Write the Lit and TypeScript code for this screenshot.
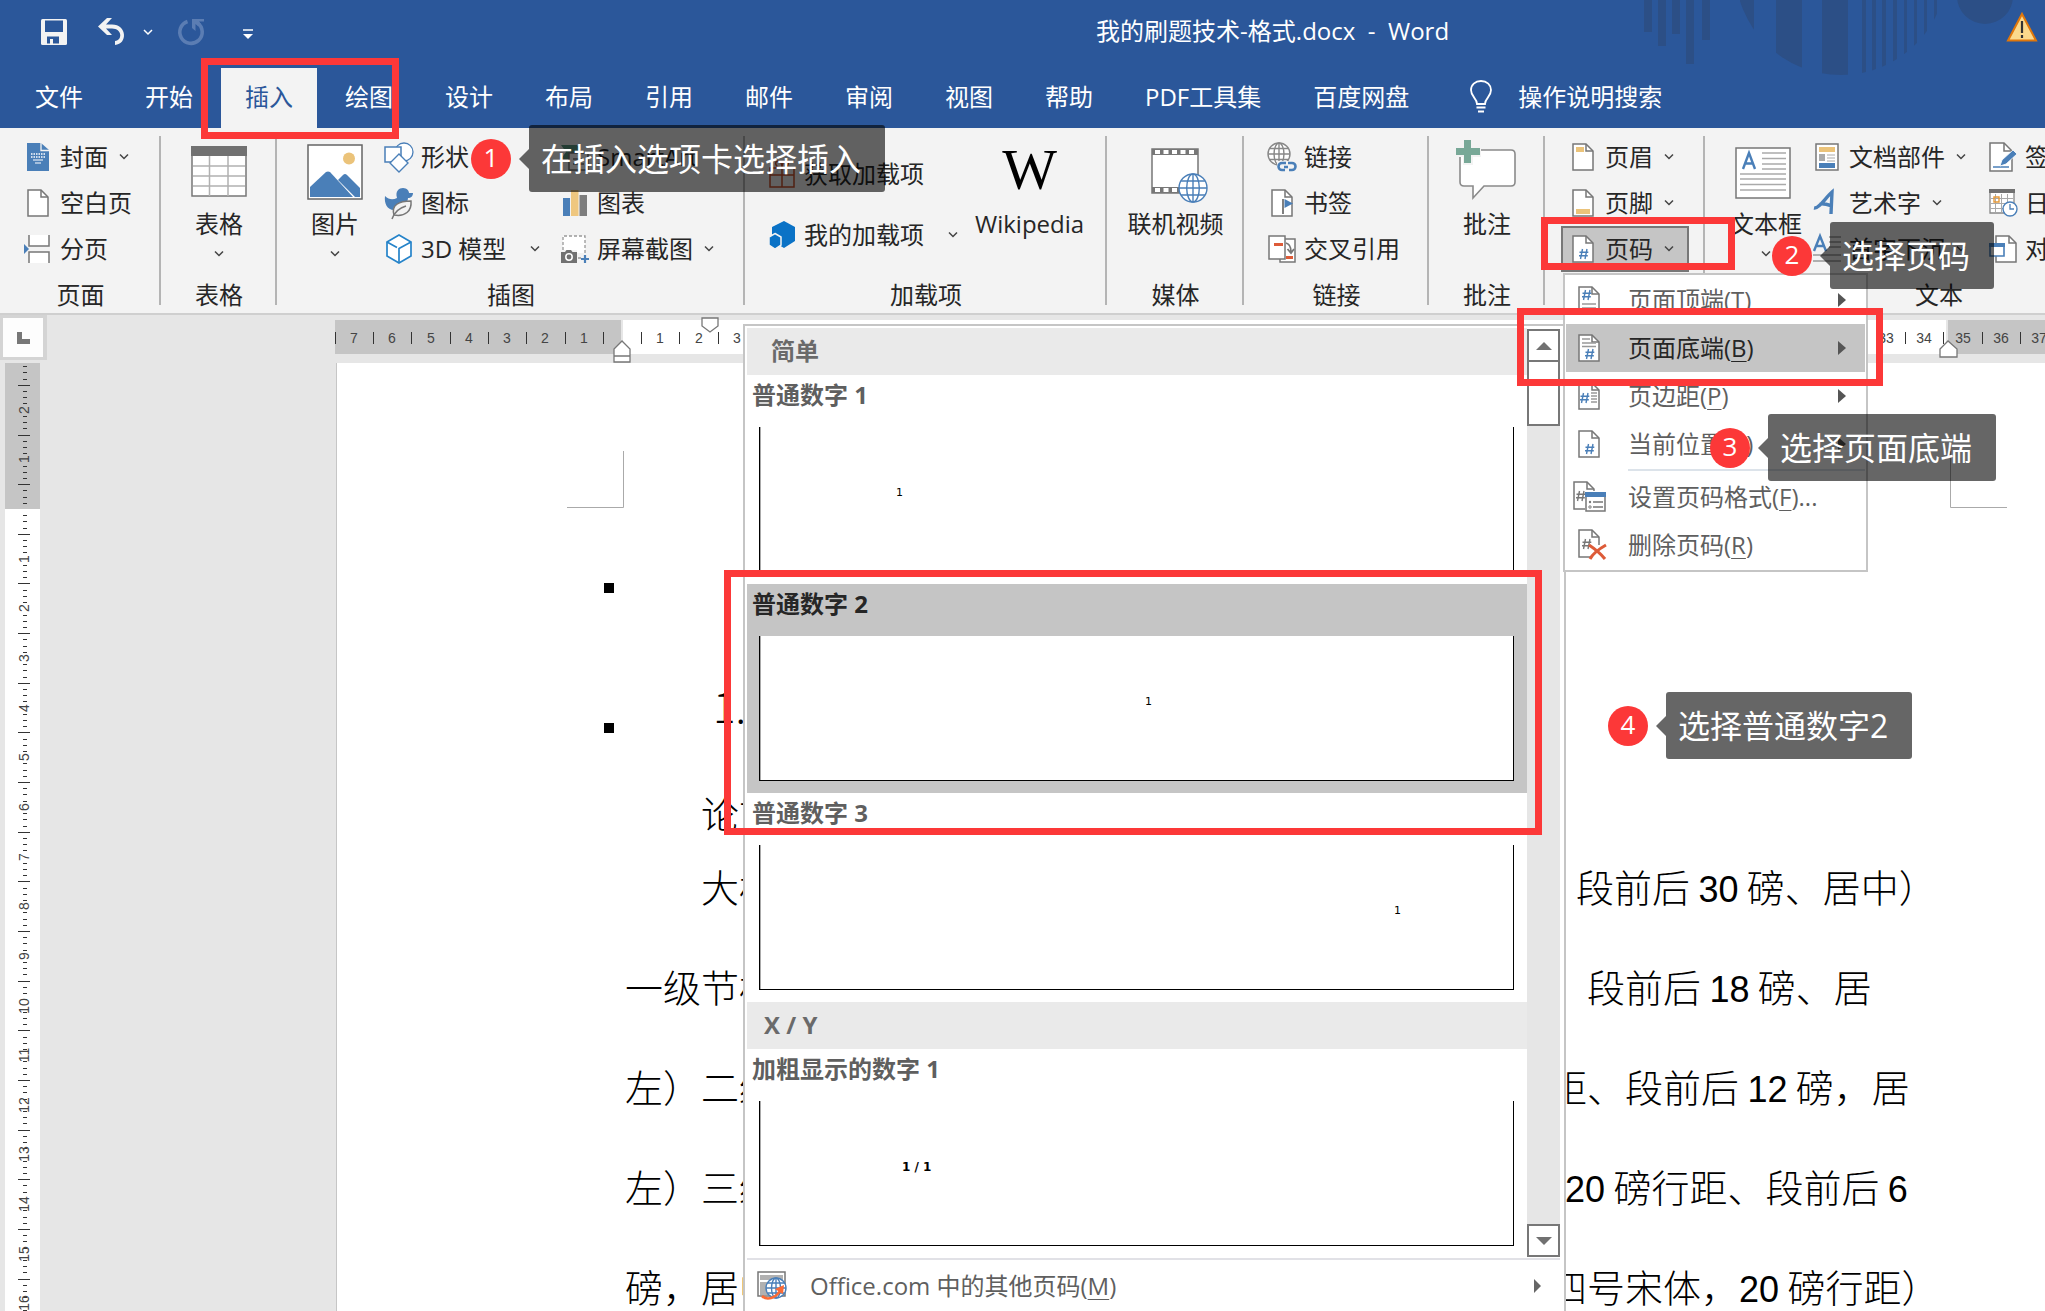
import { LitElement, html, svg, css, nothing } from "lit";
import { customElement, property } from "lit/decorators.js";
import { classMap } from "lit/directives/class-map.js";

const pic = (w: number, h: number, body: unknown) =>
  html`<svg class="pic" width=${w} height=${h} viewBox="0 0 ${w} ${h}" fill="none" aria-hidden="true">${body}</svg>`;

const sheet = (extra: unknown = nothing) =>
  pic(22, 28, svg`<path d="M1 1H14L21 8V27H1Z" fill="#fff" stroke="#777" stroke-width="1.5"/><path d="M14 1V8H21" stroke="#777" stroke-width="1.5"/>${extra}`);

const hash = (x: number, y: number, color = "#4a7fb8") =>
  svg`<path transform="translate(${x} ${y})" d="M3.5 0L1.5 10M8 0L6 10M0.5 3.2H9.3M0 6.8H8.8" stroke=${color} stroke-width="1.4"/>`;

const chevron = () => pic(12, 8, svg`<path d="M2 1.500L6 5.500L10 1.500" stroke="#444" stroke-width="1.5"/>`);

const globe = (cx: number, cy: number, r: number, color: string) =>
  svg`<g stroke=${color} stroke-width="1.4"><circle cx=${cx} cy=${cy} r=${r} fill="#fff"/><ellipse cx=${cx} cy=${cy} rx=${r * 0.45} ry=${r}/><path d="M${cx} ${cy - r}V${cy + r}M${cx - r} ${cy}H${cx + r}M${cx - r * 0.85} ${cy - r * 0.5}H${cx + r * 0.85}M${cx - r * 0.85} ${cy + r * 0.5}H${cx + r * 0.85}"/></g>`;

const icons = {
  save: pic(26, 26, svg`<path d="M0 1.5Q0 0 1.5 0H24.500Q26 0 26 1.500V24.500Q26 26 24.500 26H1.500Q0 26 0 24.500Z" fill="#f3f3f3"/><path d="M4 1.500H22V13H4ZM6 17.500H18V24.500H12V20H9V24.500H6Z" fill="#2b579a"/>`),
  undo: pic(28, 28, svg`<path d="M0 8.500L9 0H14L8 6.500H14C29 6.500 30 26 17 27V23C25 22 24 10.500 14 10.500H8L14 17H9Z" fill="#f3f3f3"/>`),
  redo: pic(28, 28, svg`<path d="M10.500 3.500A11.200 11.200 0 1 0 20.500 5" stroke="#5b7db3" stroke-width="3.600"/><path d="M15 1H27V3.500H22L24 6L21 8L18.500 6V13L15 10Z" fill="#5b7db3"/>`),
  more: pic(10, 11, svg`<path d="M0 1H10" stroke="#fff" stroke-width="1.500"/><path d="M0 5H10L5 10Z" fill="#fff"/>`),
  whiteChevron: pic(10, 7, svg`<path d="M1 1L5 5L9 1" stroke="#fff" stroke-width="1.500"/>`),
  bulb: pic(24, 34, svg`<path d="M8 24C8 18 2 17 2 10C2 5 6 1 12 1S22 5 22 10C22 17 16 18 16 24Z" stroke="#fff" stroke-width="1.8"/><path d="M7.500 27.500H16.500M9 31.500H15" stroke="#fff" stroke-width="2.2"/>`),
  warn: pic(30, 30, svg`<path d="M15 2L29 28.500H1Z" fill="#fbd98c" stroke="#e0770b" stroke-width="2"/><path d="M15 9V21M15 23V26" stroke="#333" stroke-width="2.2"/>`),
  cover: pic(22, 28, svg`<path d="M0 0H14L22 7V28H0Z" fill="#4a7fb8"/><path d="M14 0V7.500H22" stroke="#f3f3f3" stroke-width="1.300"/><path d="M4 11H18M4 14H18" stroke="#fff" stroke-width="1.400" stroke-dasharray="1.5 1"/><path d="M6 17H16M8 20H14" stroke="#fff" stroke-width="1.200"/>`),
  blank: sheet(),
  breakPage: pic(28, 30, svg`<path d="M5 1V12H25V1M5 29V18H25V29" fill="#fff" stroke="#777" stroke-width="1.5"/><path d="M0 10L5 15L0 20Z" fill="#4a7fb8"/>`),
  table: pic(56, 54, svg`<path d="M1 1H55V50H1Z" fill="#fff" stroke="#777" stroke-width="1.5"/><path d="M0 0H56V10H0Z" fill="#717171"/><path d="M2 20H54M2 30H54M2 40H54M18.500 10V50M37 10V50" stroke="#b1b1b1" stroke-width="1.5"/>`),
  picture: pic(56, 56, svg`<path d="M1 1H55V55H1Z" fill="#fff" stroke="#666" stroke-width="1.500"/><circle cx="42" cy="14.500" r="6" fill="#ebc37a"/><path d="M3 53V43L19 28Q21 27 23 28L46 53Z" fill="#4a7fb8"/><path d="M31 36L36 31Q38 29 40 31L53 44V53H48Z" fill="#4a7fb8"/>`),
  shapes: pic(30, 30, svg`<circle cx="20" cy="10" r="9" fill="#fff" stroke="#4a7fb8" stroke-width="1.3"/><path d="M1 5H17V20H1Z" fill="#fff" stroke="#4a7fb8" stroke-width="1.500"/><path d="M15 12L24 21L15 30L6 21Z" fill="#fff" stroke="#4a7fb8" stroke-width="1.4"/>`),
  duck: pic(30, 30, svg`<path d="M1 8C5 12 9 12 13 10C11 3 15 0 19 0C23 0 25 3 25 5H29C29 8 27 10 24 10C24 14 19 22 10 22C3 22 0 15 1 8Z" fill="#4a7fb8"/><path d="M10 27C7 17 15 13 27 13C28 23 21 29 10 27Z" fill="#f3f3f3" stroke="#777" stroke-width="1.500"/><path d="M8 31C10 25 15 20 22 18" stroke="#777" stroke-width="1.500"/>`),
  cube: pic(28, 30, svg`<path d="M14 1L26 8V22L14 29L2 22V8Z" stroke="#2583c9" stroke-width="1.700" fill="#fff"/><path d="M2 8L12 13.500M26 8L14 14.500V29" stroke="#2583c9" stroke-width="1.700"/>`),
  smart: pic(28, 28, svg`<path d="M0 2H16L22 10L16 16H0L5 9Z" fill="#5a9a83"/><path d="M8 10H27V27H8Z" fill="#fff" stroke="#777" stroke-width="1.5"/><path d="M12 16H23M12 21H23" stroke="#777" stroke-width="1.5"/>`),
  chart: pic(24, 26, svg`<path d="M0 8H7V26H0Z" fill="#4a7fb8"/><path d="M8 0H15.500V26H8Z" fill="#efc77f"/><path d="M16.500 5H24V26H16.500Z" fill="#7d7d7d"/>`),
  shot: pic(28, 28, svg`<path d="M2 1H24V18H16V15H2Z" fill="#fff"/><path d="M2 15V1H24V20M17 23H20" stroke="#999" stroke-width="1.300" stroke-dasharray="3 2"/><path d="M0 17H4L5.500 15H10L11.500 17H16V28H0Z" fill="#717171"/><circle cx="8" cy="22" r="3.2" stroke="#fff" stroke-width="1.500"/><path d="M24 20V28M20 24H28" stroke="#4a7fb8" stroke-width="2.200"/>`),
  gift: pic(26, 28, svg`<path d="M1 8H25V27H1ZM1 15H25M13 8V27" stroke="#c8502c" stroke-width="1.500"/><path d="M13 8C6 8 5 1 9 1S13 8 13 8S13 1 17 1S20 8 13 8" stroke="#c8502c" stroke-width="1.500"/>`),
  addin: pic(26, 28, svg`<path d="M15 0L26 6V20L15 27L3 20V6Z" fill="#0a72c6"/><path d="M6 12.500L12 16V24L6 28L0 24V16Z" fill="#0a72c6" stroke="#f3f3f3" stroke-width="1.5"/>`),
  film: pic(50, 52, svg`<path d="M1 1H47V45H1Z" fill="#fff" stroke="#777" stroke-width="1.5"/><path d="M1 4H47M1 42H47" stroke="#777" stroke-width="6"/><path d="M4 4H46M4 42H46" stroke="#fff" stroke-width="4" stroke-dasharray="5 3.500"/>${globe(42, 40, 14, "#4a7fb8")}`),
  link: pic(30, 30, svg`${globe(12, 12, 11, "#888")}<path d="M10 19H30V30H10Z" fill="#f3f3f3"/><path d="M19 21H15A3.500 3.500 0 0 0 15 28H18M17 25H21M22 28H25A3.500 3.500 0 0 0 25 21H21" stroke="#4a7fb8" stroke-width="2.600"/>`),
  bookmark: sheet(svg`<path d="M12 10V25" stroke="#555" stroke-width="1.500"/><path d="M13.500 10L22 14.500L13.500 19Z" fill="#4a7fb8"/>`),
  cross: pic(28, 28, svg`<path d="M12 4H27V27H12Z" fill="#fff" stroke="#777" stroke-width="1.5"/><path d="M1 1H17V24H1Z" fill="#fff" stroke="#777" stroke-width="1.5"/><path d="M6 8H15V11H6ZM18 21H25V24H18Z" fill="#dd5b38"/><path d="M18 8C22 9 23 12 23 17M19.500 14L23 18L26 14" stroke="#777" stroke-width="1.800"/>`),
  comment: pic(62, 60, svg`<path d="M10 10H55Q59 10 59 14V42Q59 46 55 46H28L17 58V46H8Q4 46 4 42V16Q4 10 10 10Z" fill="#fff" stroke="#8a8a8a" stroke-width="1.600"/><path d="M7 -1H17V7H25V17H17V25H7V17H-1V7H7Z" fill="#f3f3f3"/><path d="M8 0H15V8H24V15H15V23H8V15H0V8H8Z" fill="#78a897"/>`),
  head: sheet(svg`<path d="M4 4H12V9H4Z" fill="#ebc37a"/>`),
  foot: sheet(svg`<path d="M4 20H18V25H4Z" fill="#ebc37a"/>`),
  num: sheet(hash(7, 14)),
  textbox: pic(62, 54, svg`<path d="M1 2H55V52H1Z" fill="#fff" stroke="#777" stroke-width="1.500"/><path d="M8 23L14 7L20 23M10 17.500H18" stroke="#4a7fb8" stroke-width="2.400"/><path d="M27 7H51M27 12.500H51M27 18H51M27 23H51M5 28H51M5 33H51M5 38.500H51M5 44H51" stroke="#aaa" stroke-width="1.300"/>`),
  parts: pic(24, 28, svg`<path d="M1 1H23V27H1Z" fill="#fff" stroke="#777" stroke-width="1.500"/><path d="M4 4H20V9H4Z" fill="#ebc37a"/><path d="M4 11H10V18H4Z" fill="#aaa"/><path d="M12 12H20M12 15H20M12 18H20" stroke="#aaa"/><path d="M4 20H20V25H4Z" fill="#4a7fb8"/>`),
  wordart: pic(28, 26, svg`<path d="M1 18C6 19 13 7 19 2L18 24M7 14C10 13 13 14 19 16" stroke="#4a7fb8" stroke-width="3.400"/>`),
  dropcap: pic(28, 28, svg`<path d="M1 16L7 1L13 16M3 11H11" stroke="#4a7fb8" stroke-width="2.400"/><path d="M16 2H28M16 7H28M16 12H28M0 20H28M0 26H28" stroke="#999" stroke-width="1.300"/>`),
  sign: pic(28, 30, svg`<path d="M1 1H15L23 9V29H1Z" fill="#fff" stroke="#777" stroke-width="1.500"/><path d="M15 1V9H23" stroke="#777" stroke-width="1.500"/><path d="M4 25H20" stroke="#4a7fb8" stroke-width="1.500"/><path d="M11 24L13 18L24 8L28 12L17 22Z" fill="#4a7fb8" stroke="#fff" stroke-width="0.800"/>`),
  date: pic(28, 28, svg`<path d="M1 1H25V24H1Z" fill="#fff" stroke="#888" stroke-width="1.300"/><path d="M0 0H26V4H0Z" fill="#717171"/><path d="M2 9.500H24M2 14.500H24M2 19.500H24M6.500 5V23M12.500 5V23M18.500 5V23" stroke="#aaa"/><path d="M5 8H10V13H5Z" stroke="#e69a3a" stroke-width="1.400"/><circle cx="21" cy="20" r="7" fill="#fff" stroke="#4a7fb8" stroke-width="1.400"/><path d="M21 15V20H25" stroke="#4a7fb8" stroke-width="1.300"/>`),
  object: pic(28, 28, svg`<path d="M7 1H20L27 8V27H7Z" fill="#fff" stroke="#777" stroke-width="1.500"/><path d="M20 1V8H27" stroke="#777" stroke-width="1.500"/><path d="M1 9H15V21H1Z" fill="#fff" stroke="#4a7fb8" stroke-width="1.600"/><path d="M0 8H16V12H0Z" fill="#4a7fb8"/>`),
  mTop: sheet(svg`${hash(4, 4)}<path d="M4 18H18M4 22H18" stroke="#999" stroke-width="1.300"/>`),
  mBottom: sheet(svg`${hash(7, 15)}<path d="M4 5H12M4 9H18M4 12.500H18" stroke="#999" stroke-width="1.300"/>`),
  mMargin: sheet(svg`${hash(2, 11)}<path d="M13 11H19M13 14H19M13 17H19M13 20H19" stroke="#999" stroke-width="1.300"/>`),
  mHere: sheet(hash(7, 14)),
  mFormat: pic(34, 32, svg`<path d="M12 28H1V1H14L21 8V10" fill="#fff" stroke="#777" stroke-width="1.5"/><path d="M14 1V8H21" stroke="#777" stroke-width="1.5"/>${hash(3, 10, "#777")}<path d="M13 12H32V30H13Z" fill="#fff" stroke="#777" stroke-width="1.500"/><path d="M12 11H33V16H12Z" fill="#4a7fb8"/><path d="M20 21H30M20 26H30" stroke="#777" stroke-width="1.300"/><circle cx="17" cy="21" r="1.200" fill="#777"/><circle cx="17" cy="26" r="1.200" stroke="#777"/>`),
  mRemove: pic(30, 32, svg`<path d="M14 28H1V1H14L21 8V16" fill="#fff" stroke="#777" stroke-width="1.500"/><path d="M14 1V8H21" stroke="#777" stroke-width="1.500"/>${hash(4, 10, "#777")}<path d="M11 16C17 20 23 25 27 30M28 16C21 20 14 26 12 30" stroke="#dd5b38" stroke-width="3"/>`),
  office: pic(30, 30, svg`<path d="M1 1H28V25H1Z" fill="#fff" stroke="#777" stroke-width="1.500"/><path d="M3 4H26V9H3ZM3 11H12V24H3Z" fill="#b1b1b1"/>${globe(19, 17, 10, "#4a7fb8")}<path d="M5 25C10 30 20 27 24 18" stroke="#fb6a34" stroke-width="2.600"/><path d="M18 18L27 14L26 23Z" fill="#fb6a34"/>`),
};

@customElement("step-callout")
export class StepCallout extends LitElement {
  @property({ type: Number }) step = 1;
  @property() text = "";
  static styles = css`
    :host { display: flex; align-items: center; gap: 18px; width: max-content; height: 67px; }
    .badge { width: 40px; height: 40px; border-radius: 50%; background: #fc3838; color: #fff; font-size: 26px; line-height: 36px; text-align: center; }
    .bubble { position: relative; height: 67px; line-height: 68px; padding: 0 24px 0 12px; border-radius: 3px; background: rgba(0, 0, 0, 0.6); color: #fff; font-size: 32px; white-space: nowrap; }
    .bubble::before { content: ""; position: absolute; left: -10px; top: 24px; border: solid transparent; border-width: 10px 10px 10px 0; border-right-color: rgba(0, 0, 0, 0.6); }
  `;
  render() {
    return html`<span class="badge">${this.step}</span><span class="bubble">${this.text}</span>`;
  }
}

interface Cmd { icon: unknown; label: string; drop?: "near" | "far"; pressed?: boolean }

const digits = (s: string) => s.split(/(\d+)/).map((p) => (/^\d+$/.test(p) ? html`<span class="digits">${p}</span>` : p));

@customElement("app-root")
export class AppRoot extends LitElement {
  static styles = css`
    :host { display: flex; flex-direction: column; position: relative; height: 100vh; overflow: hidden; background: #e6e6e6; color: #262626; font: 24px/32px "Open Sans", "Noto Sans CJK SC", sans-serif; }
    * { box-sizing: border-box; }
    button { font: inherit; color: inherit; background: none; border: 0; padding: 0; margin: 0; white-space: nowrap; text-align: left; }
    .pic { display: block; flex: none; overflow: visible; }

    .top { position: relative; flex: none; background: #2b579a; color: #fff; }
    .art { position: absolute; top: 0; right: 0; }
    .title-bar { position: relative; display: grid; grid-template-columns: 53.6% auto 1fr; align-items: center; height: 68px; padding-bottom: 4px; }
    .quick { display: flex; align-items: center; padding-left: 41px; }
    .quick .undo { margin-left: 31px; }
    .quick .drop { margin-left: 17px; }
    .quick .redo { margin-left: 24px; }
    .quick .more { margin-left: 38px; margin-top: 4px; }
    .doc-title { font-size: 24px; font-weight: 400; margin: 0; padding-bottom: 2px; white-space: pre; }
    .alert { justify-self: end; margin: 0 8px 10px 0; }
    .tabs { position: relative; display: flex; gap: 4px; height: 60px; padding-left: 11px; }
    .tab { padding: 0 24px 2px; }
    .tab.file { margin-right: 10px; }
    .tab.on { background: #f3f3f3; color: #2b579a; }
    .tell { display: flex; align-items: center; gap: 25px; margin-left: 32px; padding-bottom: 2px; }

    .ribbon { display: flex; flex: none; height: 187px; background: #f3f3f3; border-bottom: 2px solid #cfcfcf; overflow: hidden; }
    .group { position: relative; display: flex; flex: none; flex-direction: column; padding-top: 6px; }
    .group::after { content: ""; position: absolute; right: 0; top: 8px; width: 2px; height: 169px; background: #b4b4b4; }
    .body { display: flex; height: 138px; }
    .caption { line-height: 46px; text-align: center; }
    .col { display: flex; flex-direction: column; }
    .cmd { display: flex; align-items: center; height: 46px; padding: 0 8px; gap: 8px; }
    .cmd .slot { display: flex; justify-content: center; width: 28px; }
    .cmd .near { margin-left: 2px; }
    .cmd .far { margin-left: 15px; }
    .cmd.pressed { background: #c5c5c5; outline: 2px solid #777; outline-offset: -2px; }
    .big { display: flex; flex-direction: column; align-items: center; height: 138px; }
    .big .art-slot { display: flex; align-items: flex-end; height: 68px; padding-bottom: 2px; }
    .big .name { line-height: 44px; }
    .big .chev { padding-top: 4px; }
    .wiki { font: 58px/60px "Liberation Serif", serif; color: #000; }
    .g-page { width: 161px; } .g-page .body { padding-left: 16px; }
    .g-table { width: 116px; } .g-table .body, .g-media .body, .g-note .body { justify-content: center; }
    .g-art { width: 468px; } .g-art .body { padding-left: 8px; }
    .g-art .big { width: 92px; padding-left: 8px; } .g-art .col:nth-of-type(1) { width: 176px; }
    .g-add { width: 362px; } .g-add .body { padding-left: 15px; gap: 8px; }
    .g-add .col { padding-top: 17px; gap: 15px; }
    .g-media { width: 137px; }
    .g-link { width: 185px; } .g-link .body { padding-left: 16px; }
    .g-note { width: 116px; }
    .g-hf { width: 160px; } .g-hf .body { padding-left: 16px; } .g-hf .col { width: 128px; }
    .g-text { width: 468px; } .g-text .body { padding-left: 22px; } .g-text .col:nth-of-type(1) { width: 176px; }
    .g-text .big { width: 78px; }

    .work { display: grid; flex: 1; min-height: 0; grid-template: 48px 1fr / 48px 1fr; overflow: hidden; }
    .corner { display: flex; align-items: center; justify-content: center; width: 47px; height: 45px; border: solid #d4d4d4; border-width: 3px 4px 3px 3px; background: #fdfdfd; }
    .ruler { display: block; width: 100%; height: 100%; font: 14px "Liberation Sans", sans-serif; overflow: hidden; }
    .page { position: relative; margin-left: 288px; padding: 318px 0 0 288px; background: #fff; border-left: 1px solid #c6c6c6; color: #000; font: 38px/48px "Noto Sans CJK SC", sans-serif; font-weight: 300; overflow: hidden; }
    .marks { position: absolute; left: -1px; top: 0; }
    .line { display: flex; height: 48px; margin: 0 0 52px; line-height: 44px; white-space: pre; }
    .line .start { flex: none; width: 924px; }
    .indent .start { padding-left: 76px; }
    .line.tight { margin-bottom: 26px; }
    .page h1 { font: inherit; font-size: 42px; margin: 0 0 61px; padding-left: 88px; }
    .digits { font-family: "Liberation Sans", sans-serif; font-size: 36px; line-height: 1; }

    .gallery { position: absolute; left: 743px; top: 324px; bottom: 0; width: 823px; display: grid; grid-template: auto 1fr / 780px 33px; align-content: start; padding: 2px; border: solid #c5c5c5; border-width: 2px 2px 0 2px; background: #fff; color: #5f5f5f; }
    .section { margin: 0; height: 47px; padding-left: 24px; line-height: 46px; background: #eaeaea; color: #6a6a6a; font-size: 24px; font-weight: 700; }
    .section.latin { padding-left: 17px; }
    .sample { display: flex; flex-direction: column; width: 100%; height: 209px; padding: 0 13px 12px 5px; font-weight: 700; }
    .sample.on { background: #c5c5c5; color: #262626; }
    .sample .name { line-height: 40px; height: 52px; }
    .sheet { flex: none; height: 145px; margin-left: 7px; padding: 58px 112px 0 136px; border: solid #000; border-width: 0 1px 1px 1px; box-shadow: inset 1px 0 #aaa; background: #fff; color: #000; font: 11px/16px "DejaVu Sans", sans-serif; }
    .sheet.center { text-align: center; } .sheet.right { text-align: right; } .sheet.bold { padding-left: 142px; font-weight: 700; font-size: 12px; }
    .scroll { display: flex; flex-direction: column; background: #e6e6e6; margin: 1px 0; }
    .scroll .arrow { display: flex; align-items: center; justify-content: center; height: 33px; border: 2px solid #777; background: #fff; }
    .scroll .thumb { height: 66px; margin-top: -2px; border: 2px solid #777; background: #fff; }
    .scroll .down { margin-top: auto; }
    .other { grid-column: 1 / -1; display: flex; align-items: center; height: 53px; border-top: 2px solid #e1e1e6; padding: 0 18px 0 10px; }
    .other .lbl { margin-left: 23px; flex: 1; }

    .menu { position: absolute; left: 1563px; top: 273px; width: 305px; padding: 1px; border: 2px solid #c5c5c5; background: #fff; color: #5f5f5f; }
    .item { display: grid; grid-template-columns: 62px 1fr auto; align-items: center; width: 100%; height: 48px; padding-right: 19px; }
    .item.on { background: #c5c5c5; color: #262626; }
    .item .slot { padding-left: 12px; }
    .item .slot.wide { padding-left: 7px; }
    .rule { height: 2px; margin: 1px 0 2px 62px; border: 0; background: #dce3ea; }
    u { text-underline-offset: 4px; text-decoration-thickness: 1px; }

    .frame { position: absolute; border: 7px solid #fc3838; pointer-events: none; }
    .f1 { left: 201px; top: 58px; width: 198px; height: 81px; }
    .f2 { left: 1541px; top: 217px; width: 194px; height: 53px; }
    .f3 { left: 1517px; top: 308px; width: 366px; height: 78px; }
    .f4 { left: 724px; top: 570px; width: 818px; height: 265px; }
    step-callout { position: absolute; }
    .c1 { left: 471px; top: 125px; }
    .c2 { left: 1772px; top: 222px; }
    .c3 { left: 1710px; top: 414px; }
    .c4 { left: 1608px; top: 692px; }
  `;

  private cmd = (c: Cmd) => html`<button class=${classMap({ cmd: true, pressed: !!c.pressed })}>
    <span class="slot">${c.icon}</span><span>${c.label}</span>${c.drop ? html`<span class=${c.drop}>${chevron()}</span>` : nothing}
  </button>`;

  private col = (...list: Cmd[]) => html`<div class="col">${list.map(this.cmd)}</div>`;

  private big = (icon: unknown, label: string, drop = false) => html`<button class="big">
    <span class="art-slot">${icon}</span><span class="name">${label}</span>${drop ? html`<span class="chev">${chevron()}</span>` : nothing}
  </button>`;

  private group = (cls: string, caption: string, body: unknown) => html`<section class="group ${cls}">
    <div class="body">${body}</div><div class="caption">${caption}</div>
  </section>`;

  private art() {
    const stripes = [[97, 14], [133, 26], [179, 26], [219, 4], [229, 4], [239, 4], [250, 4], [261, 3], [271, 3], [281, 3], [291, 3]];
    return html`<svg class="art" width="402" height="80" fill="#2c4f86" aria-hidden="true">
      <defs><clipPath id="disc"><circle cx="198" cy="-31" r="106"/></clipPath></defs>
      ${[[1, 32], [15, 46], [29, 34], [43, 64], [59, 40]].map(([x, h]) => svg`<rect x=${x} y="0" width="8" height=${h}/>`)}
      <g clip-path="url(#disc)">${stripes.map(([x, w]) => svg`<rect x=${x} y="0" width=${w} height="80"/>`)}</g>
      <circle cx="342" cy="-4" r="28"/>
    </svg>`;
  }

  private ribbon() {
    return html`<div class="ribbon">
      ${this.group("g-page", "页面", this.col({ icon: icons.cover, label: "封面", drop: "near" }, { icon: icons.blank, label: "空白页" }, { icon: icons.breakPage, label: "分页" }))}
      ${this.group("g-table", "表格", this.big(icons.table, "表格", true))}
      ${this.group("g-art", "插图", html`${this.big(icons.picture, "图片", true)}
        ${this.col({ icon: icons.shapes, label: "形状" }, { icon: icons.duck, label: "图标" }, { icon: icons.cube, label: "3D 模型", drop: "far" })}
        ${this.col({ icon: icons.smart, label: "SmartArt" }, { icon: icons.chart, label: "图表" }, { icon: icons.shot, label: "屏幕截图", drop: "near" })}`)}
      ${this.group("g-add", "加载项", html`${this.col({ icon: icons.gift, label: "获取加载项" }, { icon: icons.addin, label: "我的加载项", drop: "far" })}
        ${this.big(html`<span class="wiki">W</span>`, "Wikipedia")}`)}
      ${this.group("g-media", "媒体", this.big(icons.film, "联机视频"))}
      ${this.group("g-link", "链接", this.col({ icon: icons.link, label: "链接" }, { icon: icons.bookmark, label: "书签" }, { icon: icons.cross, label: "交叉引用" }))}
      ${this.group("g-note", "批注", this.big(icons.comment, "批注"))}
      ${this.group("g-hf", "", this.col({ icon: icons.head, label: "页眉", drop: "near" }, { icon: icons.foot, label: "页脚", drop: "near" }, { icon: icons.num, label: "页码", drop: "near", pressed: true }))}
      ${this.group("g-text", "文本", html`${this.big(icons.textbox, "文本框", true)}
        ${this.col({ icon: icons.parts, label: "文档部件", drop: "near" }, { icon: icons.wordart, label: "艺术字", drop: "near" }, { icon: icons.dropcap, label: "首字下沉", drop: "near" })}
        ${this.col({ icon: icons.sign, label: "签名行" }, { icon: icons.date, label: "日期和时间" }, { icon: icons.object, label: "对象" })}`)}
    </div>`;
  }

  private hRuler() {
    const zero = 574, step = 38.3;
    const at = (n: number) => Math.round(zero + n * step);
    const nums = Array.from({ length: 45 }, (_, i) => i - 7);
    return html`<svg class="ruler" aria-hidden="true">
      <rect x="287" y="5" width="100%" height="34" fill="#fff"/>
      <rect x="287" y="5" width="286" height="34" fill="#c5c5c5"/><rect x="1900" y="5" width="100%" height="34" fill="#c5c5c5"/>
      <rect x="573" y="5" width="2" height="34" fill="#e6e6e6"/><rect x="1898" y="5" width="2" height="34" fill="#e6e6e6"/>
      ${nums.map((n) => svg`<rect x=${at(n - 0.5)} y="17" width="1" height="12" fill="#333"/>
        ${n ? svg`<text x=${at(n)} y="28" text-anchor="middle" fill="#444">${Math.abs(n)}</text>` : nothing}`)}
      <g fill="#fff" stroke="#777" stroke-width="1.300">
        <path d="M654 3H670V11L662 17L654 11Z"/>
        <path d="M566 47V34L574 26L582 34V47ZM566 41H582"/>
        <path d="M1892 42V34L1900 26L1909 34V42Z"/>
      </g>
    </svg>`;
  }

  private vRuler() {
    const zero = 146, step = 49.65;
    const at = (n: number) => Math.round(zero + n * step);
    const eighths = Array.from({ length: 156 }, (_, i) => i - 23);
    return html`<svg class="ruler" aria-hidden="true">
      <rect x="5" y="0" width="35" height="100%" fill="#fff"/><rect x="5" y="0" width="35" height="146" fill="#c5c5c5"/>
      ${eighths.map((e) => {
        if (e === 0) return nothing;
        const y = at(e / 8);
        if (e % 8 === 0) return svg`<text transform="translate(29 ${y}) rotate(-90)" text-anchor="middle" fill="#444">${Math.abs(e / 8)}</text>`;
        return Math.abs(e % 8) === 4 ? svg`<rect x="18" y=${y} width="12" height="1" fill="#333"/>` : svg`<rect x="23" y=${y} width="4" height="1" fill="#333"/>`;
      })}
    </svg>`;
  }

  private line = (start: string, rest: string, pad: number, indent = false) => html`<p class=${classMap({ line: true, indent })}>
    <span class="start">${start}</span><span style="padding-left:${pad}px">${digits(rest)}</span></p>`;

  private sample = (name: string, place: string, value = "1", on = false) => html`<button class=${classMap({ sample: true, on })}>
    <span class="name">${name}</span><span class="sheet ${place}">${value}</span></button>`;

  private item = (icon: unknown, label: string, key: string, opts: { on?: boolean; sub?: boolean; wide?: boolean; tail?: string } = {}) => html`
    <button class=${classMap({ item: true, on: !!opts.on })} role="menuitem">
      <span class=${classMap({ slot: true, wide: !!opts.wide })}>${icon}</span><span>${label}(<u>${key}</u>)${opts.tail ?? ""}</span>
      ${opts.sub ? pic(8, 14, svg`<path d="M0 0L8 7L0 14Z" fill="#555"/>`) : nothing}
    </button>`;

  render() {
    return html`
      <header class="top">
        ${this.art()}
        <div class="title-bar">
          <div class="quick">
            <button aria-label="保存">${icons.save}</button>
            <button class="undo" aria-label="撤消">${icons.undo}</button>
            <button class="drop" aria-label="撤消列表">${icons.whiteChevron}</button>
            <button class="redo" aria-label="恢复">${icons.redo}</button>
            <button class="more" aria-label="自定义">${icons.more}</button>
          </div>
          <h1 class="doc-title">我的刷题技术-格式.docx  -  Word</h1>
          <span class="alert">${icons.warn}</span>
        </div>
        <nav class="tabs">
          ${["文件", "开始", "插入", "绘图", "设计", "布局", "引用", "邮件", "审阅", "视图", "帮助", "PDF工具集", "百度网盘"].map(
            (t) => html`<button class=${classMap({ tab: true, file: t === "文件", on: t === "插入" })}>${t}</button>`
          )}
          <button class="tell">${icons.bulb}<span>操作说明搜索</span></button>
        </nav>
      </header>
      ${this.ribbon()}
      <main class="work">
        <div class="corner">${pic(13, 12, svg`<path d="M2.500 0V9.500H13" stroke="#777" stroke-width="5"/>`)}</div>
        ${this.hRuler()} ${this.vRuler()}
        <article class="page">
          <svg class="marks" width="1709" height="400" fill="none" stroke="#aaa" stroke-width="1" aria-hidden="true">
            <path d="M231 144.500H287.500V88M1671 144.500H1614.500V88"/>
            <path d="M268 220H278V230H268ZM268 360H278V370H268Z" fill="#000" stroke="none"/>
          </svg>
          <h1>1.</h1>
          <p class="line indent tight"><span class="start">论文</span></p>
          ${this.line("大标", "段前后 30 磅、居中）", 27, true)}
          ${this.line("一级节标", "段前后 18 磅、居", 38)}
          ${this.line("左）二级", "距、段前后 12 磅，居", 0)}
          ${this.line("左）三级", "20 磅行距、段前后 6", 16)}
          ${this.line("磅，居中", "四号宋体，20 磅行距）", 0)}
        </article>
      </main>

      <div class="gallery">
        <div class="list">
          <h2 class="section">简单</h2>
          ${this.sample("普通数字 1", "left")}
          ${this.sample("普通数字 2", "center", "1", true)}
          ${this.sample("普通数字 3", "right")}
          <h2 class="section latin">X / Y</h2>
          ${this.sample("加粗显示的数字 1", "bold", "1 / 1")}
        </div>
        <div class="scroll">
          <button class="arrow" aria-label="向上">${pic(16, 8, svg`<path d="M0 8L8 0L16 8Z" fill="#717171"/>`)}</button>
          <div class="thumb"></div>
          <button class="arrow down" aria-label="向下">${pic(16, 8, svg`<path d="M0 0L8 8L16 0Z" fill="#717171"/>`)}</button>
        </div>
        <button class="other">${icons.office}<span class="lbl">Office.com 中的其他页码(<u>M</u>)</span>${pic(8, 14, svg`<path d="M0 0L7 7L0 14Z" fill="#666"/>`)}</button>
      </div>

      <div class="menu" role="menu">
        ${this.item(icons.mTop, "页面顶端", "T", { sub: true })}
        ${this.item(icons.mBottom, "页面底端", "B", { sub: true, on: true })}
        ${this.item(icons.mMargin, "页边距", "P", { sub: true })}
        ${this.item(icons.mHere, "当前位置", "C", { sub: true })}
        <hr class="rule" />
        ${this.item(icons.mFormat, "设置页码格式", "F", { wide: true, tail: "..." })}
        ${this.item(icons.mRemove, "删除页码", "R")}
      </div>

      <div class="frame f1"></div><div class="frame f2"></div><div class="frame f3"></div><div class="frame f4"></div>
      <step-callout class="c1" .step=${1} text="在插入选项卡选择插入"></step-callout>
      <step-callout class="c2" .step=${2} text="选择页码"></step-callout>
      <step-callout class="c3" .step=${3} text="选择页面底端"></step-callout>
      <step-callout class="c4" .step=${4} text="选择普通数字2"></step-callout>
    `;
  }
}
